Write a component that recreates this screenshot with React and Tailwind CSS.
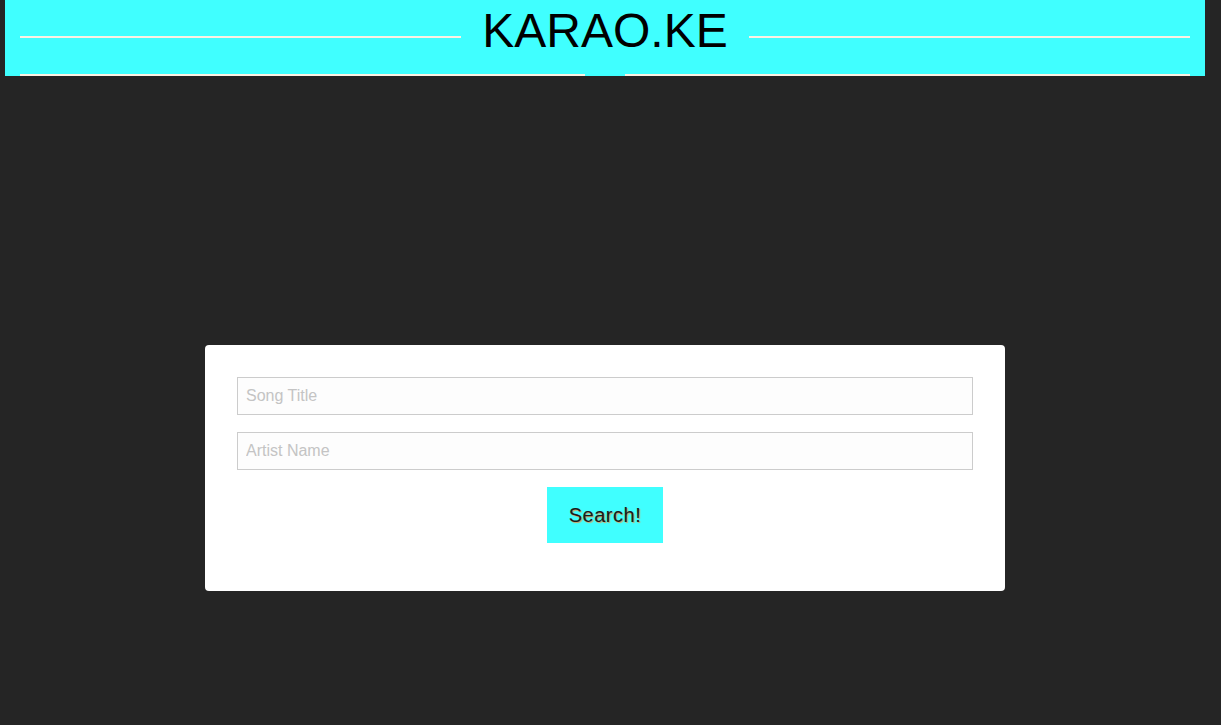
import React from 'react';

const Header = () => (
  <header className="ml-[5px] w-[1200px] h-[76px] bg-[#40ffff] px-[15px]">
    {/* title row with side rules */}
    <div className="flex items-center h-[74px]">
      <div className="flex-1 h-[2px] bg-[#fdf1e3]" />
      <h1 className="mb-[12px] px-[21px] text-[48px] leading-none text-black font-['Liberation_Sans',Arial,sans-serif]">
        KARAO.KE
      </h1>
      <div className="flex-1 h-[2px] bg-[#fdf1e3]" />
    </div>
    {/* bottom rule with gap */}
    <div className="flex gap-[40px]">
      <div className="flex-1 h-[2px] bg-[#fdf1e3]" />
      <div className="flex-1 h-[2px] bg-[#fdf1e3]" />
    </div>
  </header>
);

const SearchCard = () => (
  <div className="w-[800px] bg-white rounded-[4px] pt-[32px] px-[32px] pb-[48px] flex flex-col gap-[17px]">
    <input
      type="text"
      placeholder="Song Title"
      className="w-full h-[38px] border border-[#cccccc] bg-[#fdfdfd] px-[8px] text-[16px] text-[#333] placeholder:text-[#c4c4c4] outline-none font-['Liberation_Sans',Arial,sans-serif]"
    />
    <input
      type="text"
      placeholder="Artist Name"
      className="w-full h-[38px] border border-[#cccccc] bg-[#fdfdfd] px-[8px] text-[16px] text-[#333] placeholder:text-[#c4c4c4] outline-none font-['Liberation_Sans',Arial,sans-serif]"
    />
    <div className="flex justify-center">
      <button className="w-[116px] h-[56px] bg-[#40ffff] text-[20px] tracking-[0.5px] text-[#1a1a1a] [text-shadow:1px_1px_1px_#d9a060] font-['Liberation_Sans',Arial,sans-serif]">
        Search!
      </button>
    </div>
  </div>
);

export default function App() {
  return (
    <div className="min-h-[725px] bg-[#252525]">
      <div className="w-[1210px]">
        <Header />
        <main className="flex justify-center pt-[269px]">
          <SearchCard />
        </main>
      </div>
    </div>
  );
}
